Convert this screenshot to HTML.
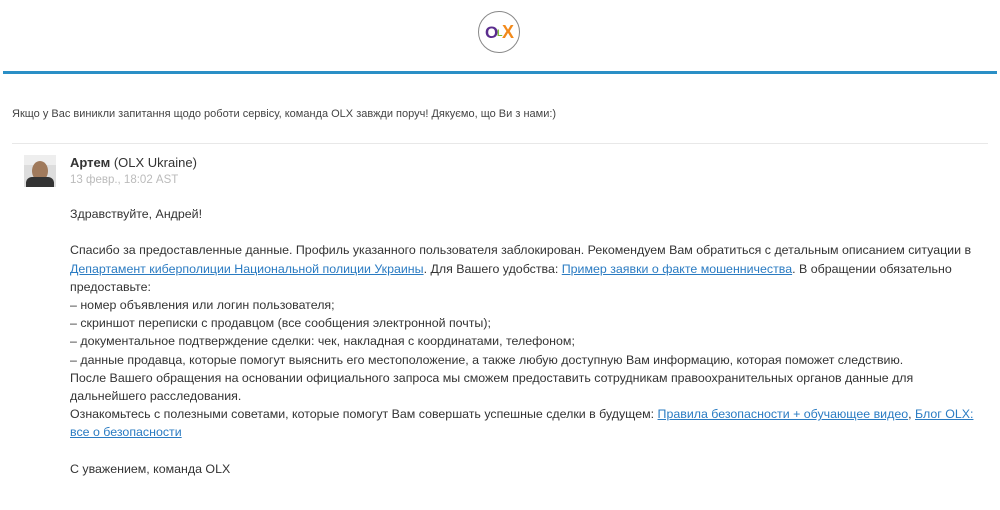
<!DOCTYPE html>
<html><head><meta charset="utf-8"><style>
body{margin:0;width:1000px;height:510px;background:#fff;font-family:"Liberation Sans",sans-serif;color:#333;overflow:hidden;position:relative}
.logo{position:absolute;left:478px;top:11px;width:42px;height:42px;border:1px solid #888;border-radius:50%;box-sizing:border-box}
.logo span{position:absolute;font-weight:bold;font-family:"Liberation Sans",sans-serif}
.bar{position:absolute;left:3px;top:71px;width:994px;height:3px;background:#2a8fc6}
.intro{position:absolute;left:12px;top:108px;font-size:11px;color:#444;white-space:nowrap}
.sep{position:absolute;left:12px;top:143px;width:976px;height:1px;background:#e8e8e8}
.av{position:absolute;left:24px;top:155px;width:32px;height:32px;background:#ddd;overflow:hidden}
.name{position:absolute;left:70px;top:155px;font-size:13px;color:#333}
.date{position:absolute;left:70px;top:174px;font-size:11.5px;color:#bbb}
.body{position:absolute;left:70px;top:205px;font-size:12.4px;line-height:18.2px;white-space:nowrap;color:#333}
a{color:#2a7bc2;text-decoration:underline}
</style></head><body>
<div class="logo"><span style="left:6px;top:11px;font-size:17px;color:#5b2d8e">O</span><span style="left:18px;top:16px;font-size:9px;color:#7ab72c">L</span><span style="left:23px;top:10px;font-size:18px;color:#f28a1b">X</span></div>
<div class="bar"></div>
<div class="intro">Якщо у Вас виникли запитання щодо роботи сервісу, команда OLX завжди поруч! Дякуємо, що Ви з нами:)</div>
<div class="sep"></div>
<div class="av"><div style="position:absolute;left:0;top:0;width:32px;height:10px;background:#eee"></div><div style="position:absolute;left:8px;top:6px;width:16px;height:20px;border-radius:50%;background:#a07a5c"></div><div style="position:absolute;left:2px;top:22px;width:28px;height:12px;background:#333;border-radius:6px 6px 0 0"></div></div>
<div class="name"><b>Артем</b> (OLX Ukraine)</div>
<div class="date">13 февр., 18:02 AST</div>
<div class="body">Здравствуйте, Андрей!<br><br>
Спасибо за предоставленные данные. Профиль указанного пользователя заблокирован. Рекомендуем Вам обратиться с детальным описанием ситуации в<br>
<a>Департамент киберполиции Национальной полиции Украины</a>. Для Вашего удобства: <a>Пример заявки о факте мошенничества</a>. В обращении обязательно<br>
предоставьте:<br>
– номер объявления или логин пользователя;<br>
– скриншот переписки с продавцом (все сообщения электронной почты);<br>
– документальное подтверждение сделки: чек, накладная с координатами, телефоном;<br>
– данные продавца, которые помогут выяснить его местоположение, а также любую доступную Вам информацию, которая поможет следствию.<br>
После Вашего обращения на основании официального запроса мы сможем предоставить сотрудникам правоохранительных органов данные для<br>
дальнейшего расследования.<br>
Ознакомьтесь с полезными советами, которые помогут Вам совершать успешные сделки в будущем: <a>Правила безопасности + обучающее видео</a>, <a>Блог OLX:</a><br>
<a>все о безопасности</a><br><br>
С уважением, команда OLX</div>
</body></html>
